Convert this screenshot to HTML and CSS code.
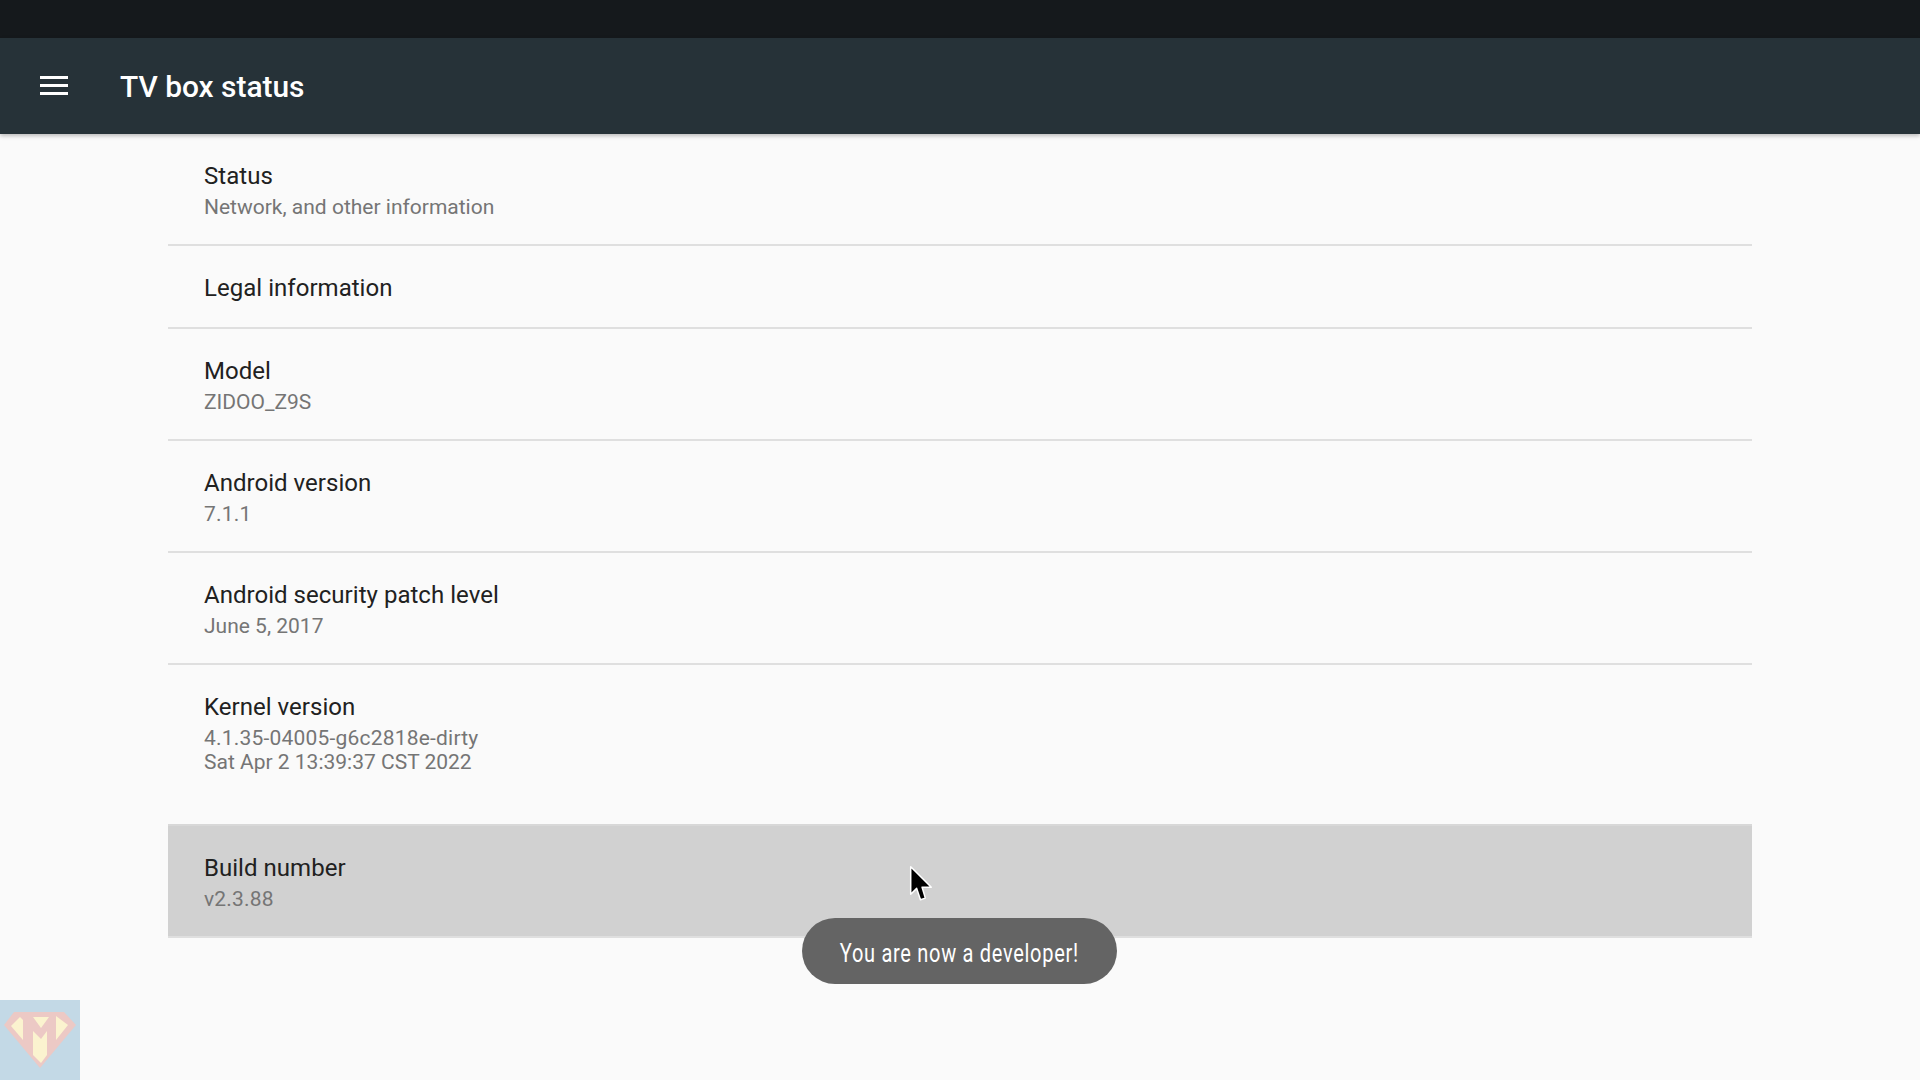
FILE: index.html
```html
<!DOCTYPE html>
<html lang="en">
<head>
<meta charset="utf-8">
<title>TV box status</title>
<link rel="stylesheet" href="styles.css">
</head>
<body>
<div class="statusbar"></div>
<header class="toolbar">
  <svg class="menu-icon" viewBox="0 0 28 20" width="28" height="20"><path d="M0 0h28v3H0zM0 8h28v3H0zM0 16h28v3H0z" fill="#fff"/></svg>
  <h1 class="toolbar-title">TV box status</h1>
</header>
<main class="list">
  <div class="row row-two"><div class="row-title">Status</div><div class="row-sub">Network, and other information</div></div>
  <div class="row row-one"><div class="row-title">Legal information</div></div>
  <div class="row row-two"><div class="row-title">Model</div><div class="row-sub">ZIDOO_Z9S</div></div>
  <div class="row row-two"><div class="row-title">Android version</div><div class="row-sub row-num">7.1.1</div></div>
  <div class="row row-two"><div class="row-title">Android security patch level</div><div class="row-sub">June 5, 2017</div></div>
  <div class="row row-kernel"><div class="row-title">Kernel version</div><div class="row-sub"><span class="row-num">4.1.35-04005-g6c2818e-dirty</span><br>Sat Apr 2 13:39:37 CST 2022</div></div>
  <div class="row row-active"><div class="row-title">Build number</div><div class="row-sub row-num">v2.3.88</div></div>
</main>
<div class="toast"><span class="toast-text">You are now a developer!</span></div>
<svg class="cursor" viewBox="0 0 24 34" width="26" height="37"><path d="M2.5 1.5V27L8 21.5 11.5 32l4.5-1.5-3-10h8.5z" fill="#000" stroke="#fff" stroke-width="1.4" stroke-linejoin="round"/></svg>
<svg class="logo" viewBox="0 0 80 80" width="80" height="80">
  <rect width="80" height="80" fill="#c3d9e6"/>
  <path d="M14 12h50l12 13-36 43L4 25z" fill="#ecc9c5"/>
  <path d="M11 26l9-9 3 3v20z" fill="#fbf3cf"/>
  <path d="M33 17h16l-8 11z" fill="#fbf3cf"/>
  <path d="M56 16l12 9-12 15z" fill="#fbf3cf"/>
  <path d="M33 31l8 8 6-8v24l-6 8-8-8z" fill="#fbf3cf"/>
</svg>
</body>
</html>
```
FILE: styles.css
```css
html, body { margin: 0; padding: 0; }
body {
  width: 1920px;
  height: 1080px;
  overflow: hidden;
  background: #fafafa;
  font-family: Roboto, "Noto Sans", sans-serif;
  position: relative;
}
.statusbar { height: 38px; background: #15191c; }
.toolbar {
  height: 96px;
  background: #263238;
  display: flex;
  align-items: center;
  padding-left: 40px;
  gap: 52px;
  box-shadow: 0 2px 4px rgba(0,0,0,.25);
  position: relative;
}
.menu-icon { flex: none; }
.toolbar-title { margin: 0; font-size: 29.9px; font-weight: 500; color: #fff; }
.list { margin: 0 168px; display: flex; flex-direction: column; }
.row {
  box-sizing: border-box;
  padding-left: 36px;
  border-bottom: 2px solid #dfdfdf;
  display: flex;
  flex-direction: column;
}
.row-two { height: 112px; padding-top: 27px; }
.row-one { height: 83px; padding-top: 27px; }
.row-kernel { height: 159px; padding-top: 27px; border-bottom: 0; }
.row-active { height: 114px; padding-top: 27px; background: #d1d1d1; border-top: 2px solid #d8d8d8; }
.row-title { font-size: 24px; line-height: 30px; color: #212121; letter-spacing: .03px; }
.row-sub { font-size: 21px; line-height: 24px; color: #757575; margin-top: 4px; }
.row-num { letter-spacing: .2px; }
.toast {
  position: absolute;
  left: 802px;
  top: 918px;
  width: 315px;
  height: 66px;
  border-radius: 33px;
  background: #646464;
  color: #fff;
  font-size: 25px;
  display: flex;
  align-items: center;
  justify-content: center;
}
.toast-text { display: inline-block; white-space: nowrap; letter-spacing: .88px; transform: scaleX(.8) translateY(2px); }
.cursor { position: absolute; left: 908px; top: 865px; }
.logo { position: absolute; left: 0; top: 1000px; }
```
